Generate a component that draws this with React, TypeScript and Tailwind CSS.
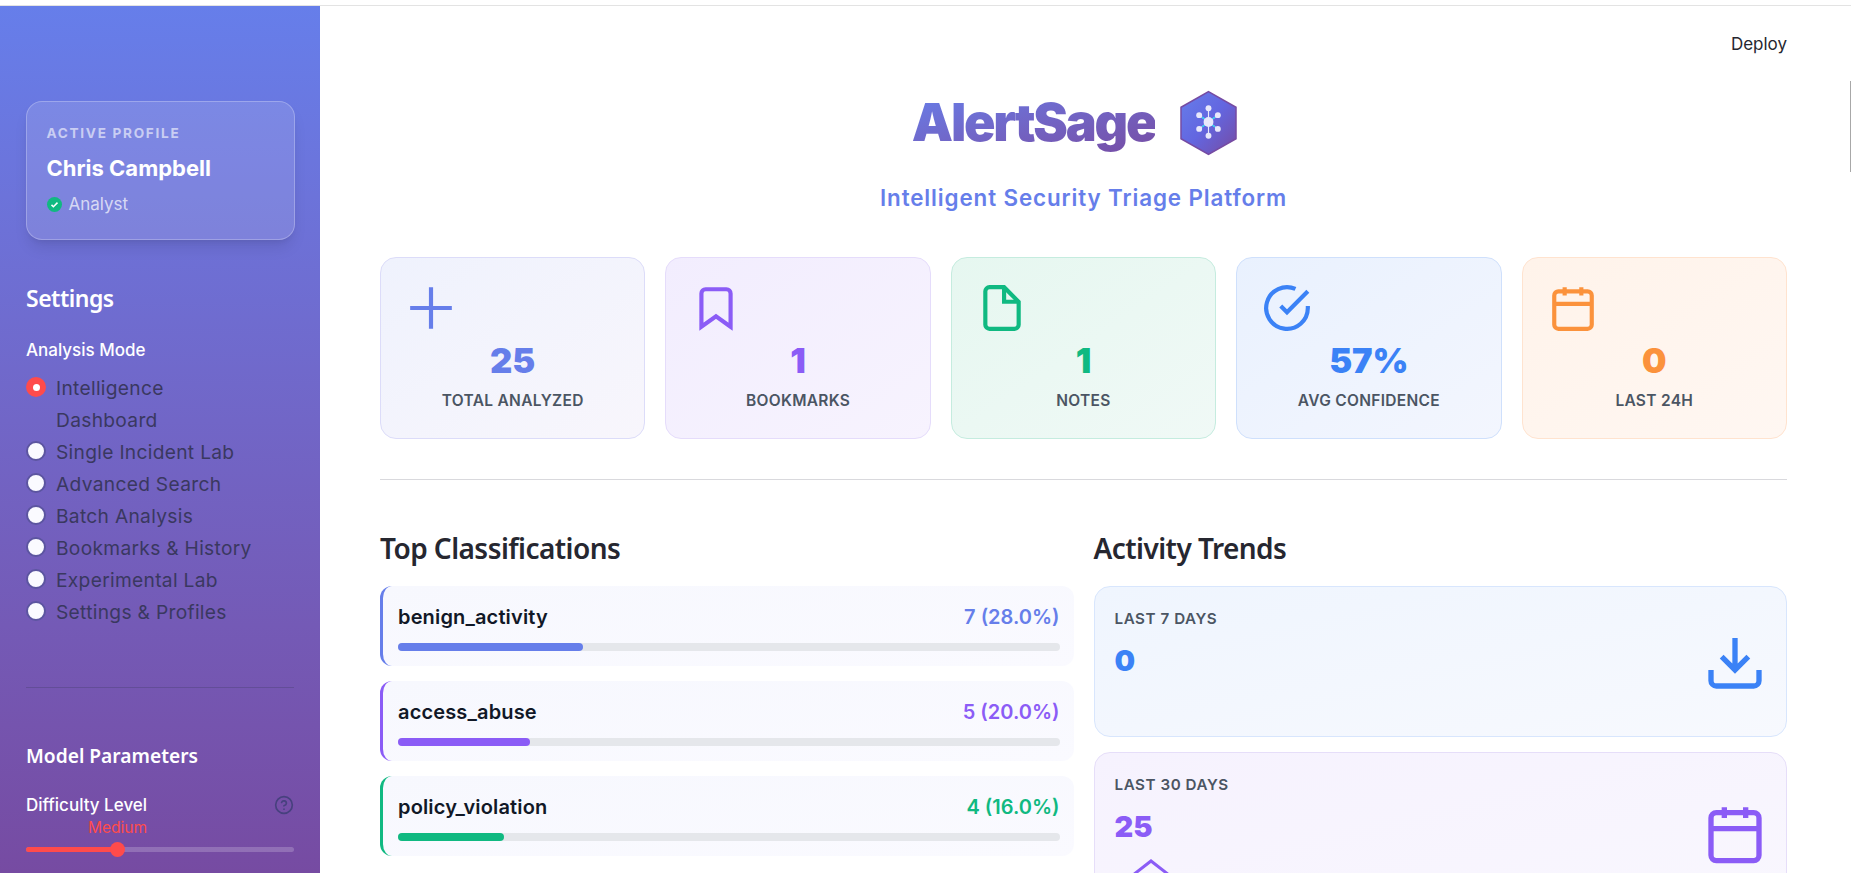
import type { ReactNode } from "react";

const inter = "font-['Inter',sans-serif]";
const heading = "font-['Noto_Sans',sans-serif]";

const modes = ["Single Incident Lab", "Advanced Search", "Batch Analysis", "Bookmarks & History", "Experimental Lab", "Settings & Profiles"];

const Icon = ({ size, className, children }: { size: number; className: string; children: ReactNode }) => (
  <svg width={size} height={size} viewBox="0 0 24 24" fill="none" stroke="currentColor" strokeWidth={2} className={className}>
    {children}
  </svg>
);

const stats = [
  {
    value: "25",
    label: "Total Analyzed",
    card: "from-[#eff2fd] to-[#f8f6fc] border-[#dcdcf9]",
    text: "text-[#667eea]",
    icon: <path d="M12 2v20M2 12h20" />,
  },
  {
    value: "1",
    label: "Bookmarks",
    card: "from-[#f2edfe] to-[#f7f3fe] border-[#e5dcfb]",
    text: "text-[#8b5cf6]",
    icon: <path d="M19 21l-7-5-7 5V5a2 2 0 0 1 2-2h10a2 2 0 0 1 2 2z" />,
  },
  {
    value: "1",
    label: "Notes",
    card: "from-[#e6f7f0] to-[#f0f9f6] border-[#c5ecdf]",
    text: "text-[#10b981]",
    icon: (
      <>
        <path d="M13 2H6a2 2 0 0 0-2 2v16a2 2 0 0 0 2 2h12a2 2 0 0 0 2-2V9z" />
        <path d="M13 2v7h7" />
      </>
    ),
  },
  {
    value: "57%",
    label: "Avg Confidence",
    card: "from-[#e9f1fe] to-[#f3f6fe] border-[#cfe0fc]",
    text: "text-[#3b82f6]",
    icon: (
      <>
        <path d="M22 11.08V12a10 10 0 1 1-5.93-9.14" />
        <path d="M22 4L12 14.01l-3-3" />
      </>
    ),
  },
  {
    value: "0",
    label: "Last 24h",
    card: "from-[#fff3ea] to-[#fff7f2] border-[#ffe3cf]",
    text: "text-[#fb923c]",
    icon: (
      <>
        <rect x="3" y="4" width="18" height="18" rx="2" />
        <path d="M16 2v4M8 2v4M3 10h18" />
      </>
    ),
  },
];

const classes = [
  { name: "benign_activity", count: "7 (28.0%)", pct: 28, border: "border-l-[#667eea]", text: "text-[#667eea]", bar: "bg-[#667eea]" },
  { name: "access_abuse", count: "5 (20.0%)", pct: 20, border: "border-l-[#8b5cf6]", text: "text-[#8b5cf6]", bar: "bg-[#8b5cf6]" },
  { name: "policy_violation", count: "4 (16.0%)", pct: 16, border: "border-l-[#10b981]", text: "text-[#10b981]", bar: "bg-[#10b981]" },
];

const Logo = () => (
  <svg width="57" height="66" viewBox="0 0 58 66" className="shrink-0">
    <defs>
      <linearGradient id="hex" x1="0" y1="0" x2="1" y2="1">
        <stop offset="0" stopColor="#667eea" />
        <stop offset="0.5" stopColor="#6366e0" />
        <stop offset="1" stopColor="#764ba2" />
      </linearGradient>
    </defs>
    <polygon points="29,1 57,17 57,49 29,65 1,49 1,17" fill="url(#hex)" stroke="#764ba2" strokeWidth="1.5" />
    <path d="M29 32L29 18M29 32L29 46M29 32L38.5 25M29 32L19.5 25M29 32L38.5 39M29 32L19.5 39" stroke="#e8e8fb" strokeWidth="1.2" />
    <path d="M33 29L35.5 27M25 29L22.5 27M33 35L35.5 37M25 35L22.5 37" stroke="#22d3ee" strokeWidth="1.4" />
    <g fill="#e8e8fb">
      <circle cx="29" cy="32" r="5" />
      <circle cx="29" cy="18" r="3" />
      <circle cx="29" cy="46" r="3" />
      <circle cx="38.5" cy="25" r="3" />
      <circle cx="19.5" cy="25" r="3" />
      <circle cx="38.5" cy="39" r="3" />
      <circle cx="19.5" cy="39" r="3" />
    </g>
  </svg>
);

const Sidebar = () => (
  <aside className="w-[320px] shrink-0 h-full bg-gradient-to-b from-[#667eea] to-[#764ba2] px-[26px] pt-[95px] text-white">
    {/* Active profile */}
    <div className="h-[139px] w-[269px] rounded-2xl border border-white/25 bg-white/[0.12] px-[19.5px] pt-[21px] shadow-lg shadow-black/10">
      <div className="text-[13.6px] leading-[20px] font-bold tracking-[1.7px] text-white/60">ACTIVE PROFILE</div>
      <div className="mt-[10px] text-[22px] leading-[30px] font-bold">Chris Campbell</div>
      <div className="mt-[9px] flex items-center gap-[7px] text-[17px] leading-[24px] text-white/70">
        <span className="flex h-[15px] w-[15px] items-center justify-center rounded-full bg-[#10b981]">
          <svg width="9" height="9" viewBox="0 0 24 24" fill="none" stroke="white" strokeWidth="4">
            <path d="M4 13l5 5L20 7" />
          </svg>
        </span>
        Analyst
      </div>
    </div>

    <h2 className={`${heading} mt-[42px] text-[23px] leading-[32px] font-semibold tracking-[-0.5px]`}>Settings</h2>
    <div className="mt-[26px] text-[17px] leading-[20px] font-medium">Analysis Mode</div>

    {/* Mode radios */}
    <div className="mt-[12px] text-[19.2px] leading-[32px] tracking-[0.3px] text-[#3a3860]">
      <div className="flex items-start gap-[10px]">
        <span className="mt-[5px] flex h-5 w-5 shrink-0 items-center justify-center rounded-full bg-[#ff4b4b]">
          <span className="h-[7px] w-[7px] rounded-full bg-white" />
        </span>
        <span>
          Intelligence
          <br />
          Dashboard
        </span>
      </div>
      {modes.map((m) => (
        <div key={m} className="flex items-start gap-[10px]">
          <span className="mt-[5px] h-5 w-5 shrink-0 rounded-full border-2 border-[#5c55a0] bg-[#fafaff]" />
          <span>{m}</span>
        </div>
      ))}
    </div>

    <div className="mt-[59px] h-px bg-[#3a3860]/30" />

    <h3 className={`${heading} mt-[54px] text-[19.2px] leading-[28px] font-semibold`}>Model Parameters</h3>
    <div className="mt-[25px] flex items-center justify-between text-[17px] leading-[20px] font-medium">
      Difficulty Level
      <svg width="20" height="20" viewBox="0 0 24 24" fill="none" stroke="#47417e" strokeWidth="2" strokeLinecap="round">
        <circle cx="12" cy="12" r="10" />
        <path d="M9.1 9a3 3 0 0 1 5.8 1c0 2-3 3-3 3M12 17h.01" />
      </svg>
    </div>
    <div className="mt-[5px] pl-[62px] text-[15.5px] leading-[16px] text-[#ff4b4b]">Medium</div>
    <div className="relative mt-[11px] h-[5px] rounded-full bg-white/20">
      <div className="h-full w-[91px] rounded-full bg-[#ff4b4b]" />
      <span className="absolute left-[84px] top-[-5px] h-[15px] w-[15px] rounded-full bg-[#ff4b4b]" />
    </div>
  </aside>
);

const StatCard = ({ stat }: { stat: (typeof stats)[number] }) => (
  <div className={`h-[182px] rounded-2xl border bg-gradient-to-br px-[25px] pt-[25px] ${stat.card}`}>
    <Icon size={50} className={stat.text}>
      {stat.icon}
    </Icon>
    <div className={`mt-[8px] text-center text-[34.5px] leading-[40px] font-black ${stat.text}`}>{stat.value}</div>
    <div className="mt-[10px] text-center text-[15.5px] leading-[20px] font-semibold tracking-[0.3px] whitespace-nowrap text-[#4b5563] uppercase">{stat.label}</div>
  </div>
);

const ClassRow = ({ row }: { row: (typeof classes)[number] }) => (
  <div className={`h-[80px] rounded-xl border-l-[3px] bg-gradient-to-br from-[#f7f8fe] to-[#fafaff] pl-[15px] pr-[14px] pt-[20px] ${row.border}`}>
    <div className="flex items-center justify-between text-[20px] leading-[22px] font-semibold">
      <span className="tracking-[0.15px] text-[#111827]">{row.name}</span>
      <span className={row.text}>{row.count}</span>
    </div>
    <div className="mt-[15px] h-[8px] rounded-full bg-[#e5e7eb]">
      <div className={`h-full rounded-full ${row.bar}`} style={{ width: `${row.pct}%` }} />
    </div>
  </div>
);

const TrendCard = ({ label, value, card, text, icon, extra }: { label: string; value: string; card: string; text: string; icon: ReactNode; extra?: ReactNode }) => (
  <div className={`flex items-center justify-between rounded-2xl border bg-gradient-to-br pl-[20px] pr-[19px] pt-[22px] ${card}`}>
    <div className="self-start">
      <div className="text-[15.2px] leading-[20px] font-semibold tracking-[0.55px] text-[#4b5563] uppercase">{label}</div>
      <div className={`mt-[12px] text-[29px] leading-[40px] font-black ${text}`}>{value}</div>
      {extra}
    </div>
    <Icon size={64} className={`-mt-[22px] ${text}`}>
      {icon}
    </Icon>
  </div>
);

export default function App() {
  return (
    <div className={`${inter} relative flex h-screen flex-col overflow-hidden bg-white`}>
      <div className="h-[6px] shrink-0 border-b border-[#e3e3e3]" />
      <div className="flex min-h-0 flex-1">
        <Sidebar />
        <main className="min-w-0 flex-1 pl-[60px] pr-[64px]">
          <div className="pt-[27px] text-right text-[17px] leading-[22px] text-[#262730]">Deploy</div>

          <div className="mt-[35px] flex items-center justify-center gap-[25px] pr-[18px]">
            <h1 className="bg-gradient-to-br from-[#667eea] to-[#764ba2] bg-clip-text text-[52px] leading-[66px] font-black tracking-[-2.25px] text-transparent">
              AlertSage
            </h1>
            <Logo />
          </div>
          <p className="mt-[28px] text-center text-[22.4px] leading-[28px] font-semibold tracking-[0.88px] text-[#667eea]">Intelligent Security Triage Platform</p>

          <div className="mt-[45px] grid grid-cols-5 gap-5">
            {stats.map((s) => (
              <StatCard key={s.label} stat={s} />
            ))}
          </div>

          <div className="mt-[40px] h-px bg-[#d9d9dd]" />

          <div className="mt-[50px] grid grid-cols-2 gap-5">
            <section>
              <h2 className={`${heading} text-[28px] leading-[36px] font-semibold tracking-[-0.55px] text-[#262730]`}>Top Classifications</h2>
              <div className="mt-[20px] flex flex-col gap-[15px]">
                {classes.map((r) => (
                  <ClassRow key={r.name} row={r} />
                ))}
              </div>
            </section>
            <section>
              <h2 className={`${heading} text-[28px] leading-[36px] font-semibold tracking-[-0.55px] text-[#262730]`}>Activity Trends</h2>
              <div className="mt-[20px] flex flex-col gap-[15px]">
                <div className="h-[151px]">
                  <TrendCard
                    label="Last 7 Days"
                    value="0"
                    card="h-full from-[#eff5fe] to-[#f7f9fe] border-[#d8e6fd]"
                    text="text-[#3b82f6]"
                    icon={<path d="M21 15v4a2 2 0 0 1-2 2H5a2 2 0 0 1-2-2v-4M7 10l5 5 5-5M12 15V3" />}
                  />
                </div>
                <TrendCard
                  label="Last 30 Days"
                  value="25"
                  card="from-[#f6f2fe] to-[#f9f7fe] border-[#e6def9]"
                  text="text-[#8b5cf6]"
                  icon={
                    <>
                      <rect x="3" y="4" width="18" height="18" rx="2" />
                      <path d="M16 2v4M8 2v4M3 10h18" />
                    </>
                  }
                  extra={
                    <svg width="48" height="48" viewBox="0 0 24 24" fill="none" stroke="currentColor" strokeWidth="1.5" className="ml-[12px] mb-[10px] mt-[10px] text-[#8b5cf6]">
                      <path d="M3 9l9-7 9 7v11a2 2 0 0 1-2 2H5a2 2 0 0 1-2-2z" />
                    </svg>
                  }
                />
              </div>
            </section>
          </div>
        </main>
      </div>
      <div className="absolute right-0 top-[81px] h-[91px] w-px bg-[#a8a8a8]" />
    </div>
  );
}
